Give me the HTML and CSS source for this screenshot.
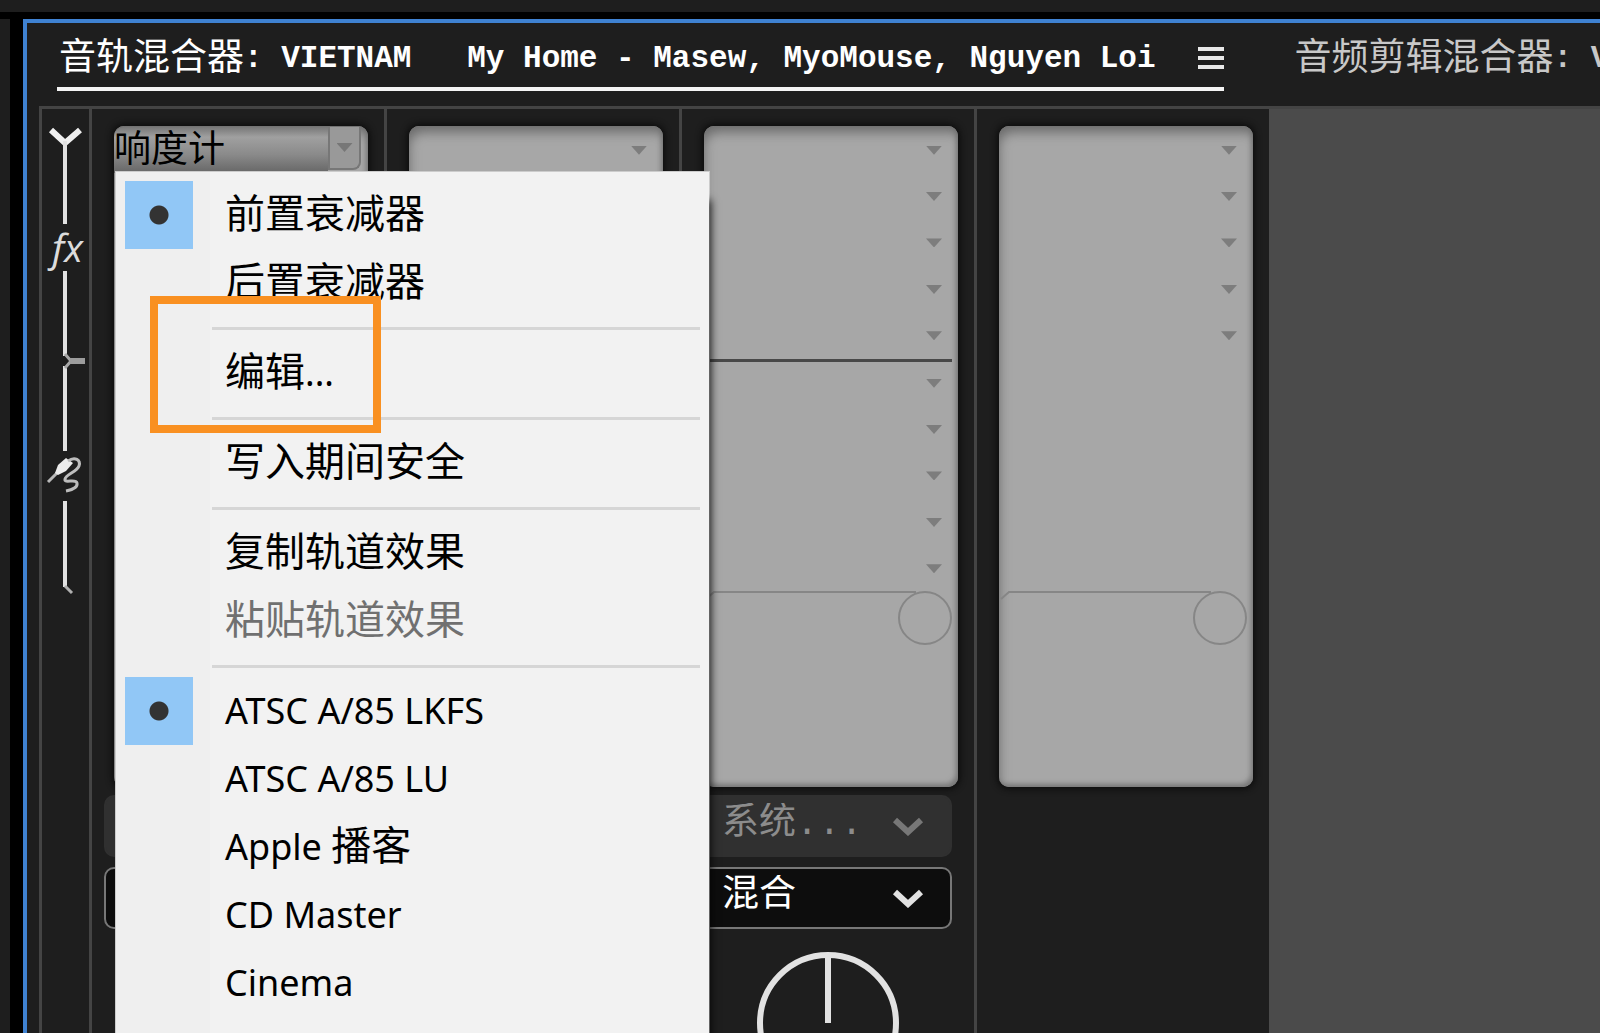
FILE: index.html
```html
<!DOCTYPE html>
<html lang="zh-CN">
<head>
  <meta charset="UTF-8" />
  <meta name="viewport" content="width=device-width, initial-scale=1" />
  <title>音轨混合器</title>
  <link rel="stylesheet" href="styles.css">
</head>
<body>
  <div class="top-strip"></div>
  <div class="workspace">
    <div class="side-strip"></div>
    <main class="panel">
      <nav class="tabs">
        <div class="tab active">
          <a href="#track"><span class="cjk">音轨混合器</span>: VIETNAM&nbsp;&nbsp; My Home - Masew, MyoMouse, Nguyen Loi</a>
          <button class="tab-menu" aria-label="面板菜单">
            <svg width="26" height="24" viewBox="0 0 26 24"><path d="M0 3h26M0 12h26M0 21h26" stroke="#e8e8e8" stroke-width="4"/></svg>
          </button>
        </div>
        <div class="tab">
          <a href="#clip"><span class="cjk">音频剪辑混合器</span>: V</a>
        </div>
      </nav>

      <div class="mixer">
        <div class="rail">
          <svg width="47" height="500" viewBox="42 108 47 500" fill="none">
            <path d="M51 129L65 142L80 129" stroke="#efefef" stroke-width="6"/>
            <path d="M65 140V223M65 270V355M65 365V450M65 500V586" stroke="#e2e2e2" stroke-width="4"/>
            <text x="52" y="261" class="fx">fx</text>
            <path d="M65 353L71 360L65 367" stroke="#a8a8a8" stroke-width="3"/>
            <path d="M70 360H85" stroke="#9c9c9c" stroke-width="6"/>
            <path d="M48 481L58 471" stroke="#b8b8b8" stroke-width="3"/>
            <path d="M55 472L58 464L66 457L73 462L66 470L58 474Z" fill="#ececec"/>
            <path d="M68 460C75 455 81 459 79 465C77 471 66 473 65 478C64 483 76 477 77 482C78 487 71 489 66 490" stroke="#bdbdbd" stroke-width="3"/>
            <path d="M65 585L72 592" stroke="#b0b0b0" stroke-width="3"/>
          </svg>
        </div>

        <section class="channel">
          <div class="rack">
            <div class="group">
              <div class="insert loaded">
                <button class="effect">响度计</button>
                <button class="arrow boxed" aria-label="效果选项"></button>
                <ul class="menu" role="menu">
                  <li><button class="item checked">前置衰减器</button></li>
                  <li><button class="item">后置衰减器</button></li>
                  <li class="sep"></li>
                  <li class="marked"><button class="item">编辑<span class="latin">...</span></button></li>
                  <li class="sep"></li>
                  <li><button class="item">写入期间安全</button></li>
                  <li class="sep"></li>
                  <li><button class="item">复制轨道效果</button></li>
                  <li><button class="item" disabled>粘贴轨道效果</button></li>
                  <li class="sep"></li>
                  <li><button class="item checked"><span class="latin">ATSC A/85 LKFS</span></button></li>
                  <li><button class="item"><span class="latin">ATSC A/85 LU</span></button></li>
                  <li><button class="item"><span class="latin">Apple </span>播客</button></li>
                  <li><button class="item"><span class="latin">CD Master</span></button></li>
                  <li><button class="item"><span class="latin">Cinema</span></button></li>
                </ul>
              </div>
            </div>
          </div>
          <div class="routing">
            <div class="drop off"></div>
            <div class="drop"></div>
          </div>
        </section>

        <section class="channel">
          <div class="rack">
            <div class="group">
              <div class="insert"><button class="arrow" aria-label="效果 1"></button></div>
            </div>
          </div>
        </section>

        <section class="channel">
          <div class="rack">
            <div class="group">
              <div class="insert"><button class="arrow" aria-label="效果 1"></button></div>
              <div class="insert"><button class="arrow" aria-label="效果 2"></button></div>
              <div class="insert"><button class="arrow" aria-label="效果 3"></button></div>
              <div class="insert"><button class="arrow" aria-label="效果 4"></button></div>
              <div class="insert"><button class="arrow" aria-label="效果 5"></button></div>
            </div>
            <div class="group sends">
              <div class="insert"><button class="arrow" aria-label="发送 1"></button></div>
              <div class="insert"><button class="arrow" aria-label="发送 2"></button></div>
              <div class="insert"><button class="arrow" aria-label="发送 3"></button></div>
              <div class="insert"><button class="arrow" aria-label="发送 4"></button></div>
              <div class="insert"><button class="arrow" aria-label="发送 5"></button></div>
            </div>
            <svg class="knob" width="254" height="56" viewBox="0 0 254 56" fill="none" stroke="#868686" stroke-width="2">
              <path d="M2 9L10 2H212"/><circle cx="221" cy="28" r="26"/>
            </svg>
          </div>
          <div class="routing">
            <div class="drop off">
              <select disabled aria-label="输入"><option>系统...</option></select>
              <svg width="32" height="20" viewBox="0 0 32 20" fill="none"><path d="M3 4L16 16L29 4" stroke="#777" stroke-width="6"/></svg>
            </div>
            <div class="drop">
              <select aria-label="输出"><option>混合</option></select>
              <svg width="32" height="20" viewBox="0 0 32 20" fill="none"><path d="M3 4L16 16L29 4" stroke="#e2e2e2" stroke-width="6"/></svg>
            </div>
          </div>
          <svg class="dial" width="144" height="144" viewBox="0 0 144 144" fill="none" stroke="#e2e2e2" stroke-width="6">
            <circle cx="72" cy="72" r="68"/><path d="M72 4V72"/>
          </svg>
        </section>

        <section class="channel">
          <div class="rack">
            <div class="group">
              <div class="insert"><button class="arrow" aria-label="效果 1"></button></div>
              <div class="insert"><button class="arrow" aria-label="效果 2"></button></div>
              <div class="insert"><button class="arrow" aria-label="效果 3"></button></div>
              <div class="insert"><button class="arrow" aria-label="效果 4"></button></div>
              <div class="insert"><button class="arrow" aria-label="效果 5"></button></div>
            </div>
            <div class="group"></div>
            <svg class="knob" width="254" height="56" viewBox="0 0 254 56" fill="none" stroke="#868686" stroke-width="2">
              <path d="M2 9L10 2H212"/><circle cx="221" cy="28" r="26"/>
            </svg>
          </div>
        </section>

        <div class="empty"></div>
      </div>
    </main>
  </div>
</body>
</html>
```
FILE: styles.css
```css
*, *::before, *::after {
  box-sizing: border-box;
}
body {
  margin: 0;
  height: 100vh;
  overflow: hidden;
  display: flex;
  flex-direction: column;
  gap: 7px;
  background: #000;
  color: #fff;
  font-family: "Noto Sans CJK SC", sans-serif;
}
button {
  border: none;
  background: none;
  padding: 0;
  color: inherit;
  font-family: inherit;
}
svg {
  display: block;
  flex: none;
}
.top-strip {
  height: 12px;
  flex: none;
  background: #1e1e1e;
}
.workspace {
  flex: 1;
  min-height: 0;
  display: flex;
  gap: 13px;
}
.side-strip {
  width: 10px;
  flex: none;
  background: #1e1e1e;
}
.panel {
  flex: 1;
  min-width: 0;
  display: flex;
  flex-direction: column;
  overflow: hidden;
  background: #1e1e1e;
  border-top: 4px solid #3f82d2;
  border-left: 4px solid #3f82d2;
}

/* tabs */
.tabs {
  height: 83px;
  flex: none;
  display: flex;
  align-items: flex-start;
  gap: 69px;
  padding-left: 30px;
}
.tab {
  height: 68px;
  flex: none;
  display: flex;
  align-items: center;
  gap: 42px;
  padding: 6px 0 0 2px;
  border-bottom: 4px solid transparent;
  color: #c8c8c8;
}
.tab.active {
  border-color: #f4f4f4;
  color: #fff;
}
.tab a {
  color: inherit;
  text-decoration: none;
  white-space: nowrap;
  font: bold 31px/58px "Liberation Mono", "Noto Sans CJK SC", monospace;
}
.tab .cjk {
  font: 37px/52px "Noto Sans CJK SC", sans-serif;
  vertical-align: -3px;
}

/* mixer */
.mixer {
  flex: 1;
  min-height: 0;
  display: flex;
  margin-left: 12px;
  border-top: 3px solid #444;
  border-left: 3px solid #444;
}
.rail {
  width: 47px;
  flex: none;
}
.fx {
  font: italic 39px "Open Sans", sans-serif;
  fill: #dcdcdc;
}
.channel {
  width: 295px;
  flex: none;
  border-left: 3px solid #444;
  padding-top: 17px;
}
.rack {
  width: 254px;
  height: 661px;
  margin-left: 22px;
  border-radius: 10px;
  background: #a7a7a7;
  box-shadow: inset 4px 10px 12px -4px #6a6a6a, inset -3px -4px 5px -1px #777, 0 0 6px 2px #0c0c0c;
}
.group {
  height: 233px;
  padding-top: 1px;
  display: grid;
  grid-template-rows: repeat(5, 1fr);
}
.group.sends {
  margin-right: 6px;
  box-shadow: inset 0 3px #484848;
}
.group.sends .insert {
  padding-right: 10px;
}
.insert {
  display: flex;
  align-items: center;
  justify-content: flex-end;
  padding-right: 16px;
}
.arrow {
  width: 16px;
  height: 9px;
  background: #7d7d7d;
  clip-path: polygon(0 0, 100% 0, 50% 100%);
}
.insert.loaded {
  position: relative;
  padding-right: 7px;
  align-items: stretch;
}
.effect {
  flex: 1;
  padding-bottom: 8px;
  border-radius: 10px 0 0 0;
  background: linear-gradient(#777, #a0a0a0 22%, #8a8a8a 60%, #666);
  color: #000;
  font-size: 37px;
  line-height: 38px;
  text-align: left;
}
.arrow.boxed {
  width: 33px;
  height: 43px;
  clip-path: none;
  background: #999;
  border: 2px solid #777;
  border-top: none;
  border-radius: 0 0 8px 0;
  display: flex;
  align-items: center;
  justify-content: center;
}
.arrow.boxed::after {
  content: "";
  width: 16px;
  height: 9px;
  background: #777;
  clip-path: polygon(0 0, 100% 0, 50% 100%);
}
.knob {
  margin-top: -2px;
}
.routing {
  display: grid;
  gap: 10px;
  padding: 8px 22px 0 12px;
}
.drop {
  height: 62px;
  display: flex;
  align-items: center;
  padding-right: 26px;
  border: 2px solid #777;
  border-radius: 10px;
  background: #0d0d0d;
  color: #fff;
}
.drop.off {
  background: #303030;
  border-color: #303030;
  color: #8c8c8c;
}
.drop select {
  flex: 1;
  min-width: 0;
  height: 58px;
  padding: 0 0 4px 26px;
  appearance: none;
  border: none;
  background: none;
  color: inherit;
  opacity: 1;
  font: 37px "Liberation Mono", "Noto Sans CJK SC", monospace;
}
.dial {
  margin: 22px auto 0;
}
.empty {
  flex: 1;
  background: #4b4b4b;
}

/* context menu */
.menu {
  position: absolute;
  z-index: 10;
  left: 2px;
  top: 45px;
  width: 593px;
  margin: 0;
  padding: 9px 9px 40px 9px;
  list-style: none;
  background: linear-gradient(to right, #efefef 94px, #f2f2f2 94px);
  box-shadow: 10px 20px 8px -8px rgba(0, 0, 0, 0.8), 0 0 0 1px #ccc;
  color: #000;
}
.menu li {
  position: relative;
}
.item {
  display: flex;
  align-items: center;
  width: 100%;
  height: 68px;
  padding: 0 0 8px 100px;
  font-size: 40px;
  line-height: 60px;
  white-space: pre;
}
.item:disabled {
  color: #707070;
}
.item.checked {
  background: radial-gradient(circle at 34px 34px, #333 9px, transparent 10px), linear-gradient(#91c7f6, #91c7f6) 0 0 / 68px 68px no-repeat;
}
.latin {
  padding-top: 8px;
  font-family: "Noto Sans", sans-serif;
  font-size: 36px;
}
.sep {
  height: 22px;
  padding: 10px 0 0 87px;
}
.sep::after {
  content: "";
  display: block;
  height: 3px;
  background: #d6d6d6;
}
.marked::after {
  content: "";
  position: absolute;
  z-index: 1;
  left: 25px;
  top: -43px;
  width: 231px;
  height: 137px;
  border: 8px solid #f99021;
  pointer-events: none;
}
```
